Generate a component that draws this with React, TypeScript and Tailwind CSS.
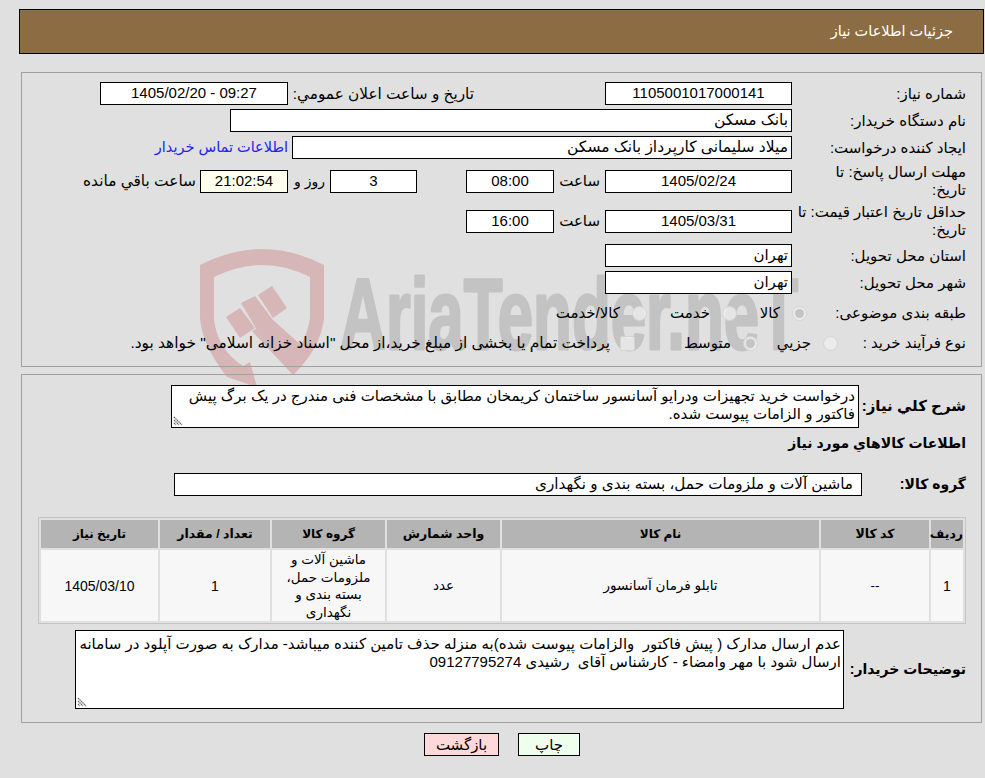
const font = "font-['Liberation_Sans','DejaVu_Sans',sans-serif]"

function Box({ className, bg = "bg-white", children }: { className: string; bg?: string; children?: React.ReactNode }) {
  return (
    <div className={"h-[23px] shrink-0 border border-black px-[3px] leading-[20px] whitespace-nowrap overflow-hidden " + bg + " " + className}>
      {children}
    </div>
  )
}

function Row({ label, labelClass, className, children }: { label: string; labelClass?: string; className?: string; children?: React.ReactNode }) {
  return (
    <div className={"flex items-center " + (className ?? "")}>
      <div className={"w-[174px] shrink-0 leading-[18px] " + (labelClass ?? "")}>{label}</div>
      {children}
    </div>
  )
}

function Radio({ checked, className }: { checked?: boolean; className?: string }) {
  return (
    <span className={"flex h-[15px] w-[15px] shrink-0 items-center justify-center rounded-full border border-[#d4d4d4] bg-[#eeeeee]/80 " + (className ?? "")}>
      {checked && <span className="h-[9px] w-[9px] rounded-full bg-[#c4c4c4]" />}
    </span>
  )
}

function Grip() {
  return (
    <svg className="pointer-events-none absolute bottom-[2px] left-[2px] h-[10px] w-[10px]" viewBox="0 0 10 10">
      <path d="M1 1 L9 9 M1 4 L6 9 M1 7 L3 9" stroke="#666666" strokeWidth="1.2" strokeDasharray="1.5 0.6" />
    </svg>
  )
}

function Watermark() {
  return (
    <svg className="absolute inset-0 h-full w-full" viewBox="0 0 985 778">
      <path
        d="M200 265 Q262 233 324 265 L324 318 Q321 348 293 375 L285 366 Q306 345 310 318 L310 277 Q262 253 214 277 L214 320 Q218 350 243 366 L250 362 L257 387 L227 377 Q202 345 200 318 Z"
        fill="#d6b6b6"
      />
      <path
        d="M226 317 L240 308 L255 328 L240 338 Z M241 303 L255 296 L273 320 L257 330 Z M258 295 L272 286 L287 308 L273 318 Z M252 331 L273 320 L310 353 L293 375 Z"
        fill="#d6b6b6"
      />
      <text
        x="340"
        y="349"
        direction="ltr"
        fontFamily="'Liberation Sans', sans-serif"
        fontWeight="700"
        fontSize="100"
        fill="#c3c3c3"
        stroke="#c3c3c3"
        strokeWidth="3"
        strokeLinejoin="round"
        textLength="458"
        lengthAdjust="spacingAndGlyphs"
      >
        AriaTender.neT
      </text>
    </svg>
  )
}

export default function App() {
  return (
    <div dir="rtl" className={"relative h-[778px] w-[985px] overflow-hidden bg-[#e0e0e0] text-[15px] text-black " + font}>
      <Watermark />

      <div className="relative ml-[19px] mr-[1px] pt-[9px]">
        <div className="flex h-[45px] items-center border border-black bg-[#8c6c42] pr-[30px] text-[14.5px] text-white">جزئیات اطلاعات نیاز</div>
      </div>

      <div className="relative ml-[21px] mr-[3px] mt-[18px] h-[295px] border border-[#a0a0a0] pr-[15px] pt-[9px]">
        <Row label="شماره نیاز:">
          <Box className="w-[187px] text-center">1105001017000141</Box>
          <div className="mr-[131px] w-[181px] shrink-0 text-[15.3px] leading-[23px] whitespace-nowrap">تاریخ و ساعت اعلان عمومي:</div>
          <Box className="mr-[5px] w-[188px] text-center">
            <span dir="ltr">1405/02/20 - 09:27</span>
          </Box>
        </Row>
        <Row label="نام دستگاه خریدار:" className="mt-[4px]">
          <Box className="w-[562px] text-[15.5px]">بانک مسکن</Box>
        </Row>
        <Row label="ایجاد کننده درخواست:" className="mt-[4px]">
          <Box className="w-[500px] text-[15.5px]">میلاد سلیمانی کارپرداز بانک مسکن</Box>
          <a className="mr-[4px] text-[14.5px] whitespace-nowrap text-[#2222ee]">اطلاعات تماس خریدار</a>
        </Row>
        <Row label="مهلت ارسال پاسخ: تا تاریخ:" labelClass="pl-[10px]" className="mt-[4px] h-[36px]">
          <Box className="w-[187px] text-center">1405/02/24</Box>
          <div className="mr-[5px] w-[46px] shrink-0">ساعت</div>
          <Box className="w-[88px] text-center">08:00</Box>
          <Box className="mr-[49px] w-[87px] text-center">3</Box>
          <div className="mr-[5px] w-[37px] shrink-0 text-[14px] whitespace-nowrap">روز و</div>
          <Box className="w-[88px] text-center" bg="bg-[#ffffee]">21:02:54</Box>
          <div className="mr-[4px] text-[15.4px] whitespace-nowrap">ساعت باقي مانده</div>
        </Row>
        <Row label="حداقل تاریخ اعتبار قیمت: تا تاریخ:" className="mt-[4px] h-[36px]">
          <Box className="w-[187px] text-center">1405/03/31</Box>
          <div className="mr-[5px] w-[46px] shrink-0">ساعت</div>
          <Box className="w-[88px] text-center">16:00</Box>
        </Row>
        <Row label="استان محل تحویل:" className="mt-[5px]">
          <Box className="w-[187px]">تهران</Box>
        </Row>
        <Row label="شهر محل تحویل:" className="mt-[4px]">
          <Box className="w-[187px]">تهران</Box>
        </Row>
        <Row label="طبقه بندی موضوعی:" className="mt-[8px] h-[22px]">
          <div className="-mr-[15px] flex items-center">
            <Radio checked />
            <span className="mr-[12px] w-[43px] shrink-0">کالا</span>
            <Radio />
            <span className="mr-[12px] w-[63px] shrink-0">خدمت</span>
            <Radio />
            <span className="mr-[12px] whitespace-nowrap">کالا/خدمت</span>
          </div>
        </Row>
        <Row label="نوع فرآیند خرید :" className="mt-[8px] h-[22px]">
          <div className="-mr-[46px] flex items-center">
            <Radio />
            <span className="mr-[12px] w-[53px] shrink-0">جزيي</span>
            <Radio checked />
            <span className="mr-[12px] w-[96px] shrink-0">متوسط</span>
            <span className="h-[15px] w-[15px] shrink-0 rounded-[2px] border border-[#d4d4d4] bg-[#eeeeee]/80" />
            <span className="mr-[10px] text-[15.4px] whitespace-nowrap">پرداخت تمام یا بخشی از مبلغ خرید،از محل "اسناد خزانه اسلامی" خواهد بود.</span>
          </div>
        </Row>
      </div>

      <div className="relative ml-[21px] mr-[3px] mt-[7px] h-[349px] border border-[#a0a0a0] pr-[15px] pt-[10px]">
        <div className="flex items-center">
          <div className="w-[107px] shrink-0 font-bold">شرح کلي نیاز:</div>
          <div className="relative shrink-0">
            <textarea
              readOnly
              dir="rtl"
              className="block h-[43px] w-[688px] resize-none border border-black bg-white px-[3px] pt-[1px] leading-[18px] outline-none"
              defaultValue="درخواست خرید تجهیزات ودرایو آسانسور ساختمان کریمخان مطابق با مشخصات فنی مندرج در یک برگ پیش فاکتور و الزامات پیوست شده."
            />
            <Grip />
          </div>
        </div>
        <div className="mt-[4px] h-[23px] text-[14px] font-bold leading-[23px]">اطلاعات کالاهاي مورد نیاز</div>
        <div className="mt-[18px] flex items-center">
          <div className="w-[104px] shrink-0 text-[14px] font-bold">گروه کالا:</div>
          <Box className="w-[688px] pr-[8px] text-[15.2px]">ماشین آلات و ملزومات حمل، بسته بندی و نگهداری</Box>
        </div>

        <table className="mt-[21px] w-[928px] table-fixed border-separate border-spacing-[2px] border border-[#c4c4c4] text-center">
          <thead>
            <tr className="h-[28px] bg-[#b4b4b4] text-[12.5px] font-bold">
              <th className="w-[32px] p-0">ردیف</th>
              <th className="w-[108px] p-0">کد کالا</th>
              <th className="w-[317px] p-0 text-[12px]">نام کالا</th>
              <th className="w-[113px] p-0">واحد شمارش</th>
              <th className="w-[113px] p-0 text-[12px]">گروه کالا</th>
              <th className="w-[110px] p-0">تعداد / مقدار</th>
              <th className="p-0 text-[12px]">تاریخ نیاز</th>
            </tr>
          </thead>
          <tbody>
            <tr className="h-[71px] bg-[#f7f7f7] text-[13.5px]">
              <td className="p-0 pt-[1px] text-[14px]">1</td>
              <td className="p-0 pt-[1px]">--</td>
              <td className="p-0 pt-[1px]">تابلو فرمان آسانسور</td>
              <td className="p-0 pt-[1px]">عدد</td>
              <td className="p-0 pt-[1px] leading-[17.5px]">ماشین آلات و ملزومات حمل، بسته بندی و نگهداری</td>
              <td className="p-0 pt-[1px] text-[14px]">1</td>
              <td className="p-0 pt-[1px] text-[14px]">1405/03/10</td>
            </tr>
          </tbody>
        </table>

        <div className="mt-[6px] flex items-center">
          <div className="w-[122px] shrink-0 text-[14px] font-bold whitespace-nowrap">توضیحات خریدار:</div>
          <div className="relative shrink-0">
            <textarea
              readOnly
              dir="rtl"
              className="block h-[79px] w-[769px] resize-none border border-black bg-white pl-0 pr-[2px] pt-[4px] leading-[18px] outline-none"
              defaultValue="عدم ارسال مدارک ( پیش فاکتور  والزامات پیوست شده)به منزله حذف تامین کننده میباشد- مدارک به صورت آپلود در سامانه ارسال شود با مهر وامضاء - کارشناس آقای  رشیدی 09127795274"
            />
            <Grip />
          </div>
        </div>
      </div>

      <div className="relative mr-[405px] mt-[10px] flex gap-[19px]">
        <button className="h-[23px] w-[62px] border border-black bg-[#eeffee]">چاپ</button>
        <button className="h-[23px] w-[75px] border border-black bg-[#ffd9d9]">بازگشت</button>
      </div>
    </div>
  )
}
